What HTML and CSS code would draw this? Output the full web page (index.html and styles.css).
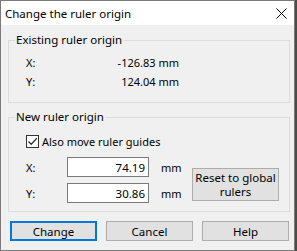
FILE: index.html
```html
<!DOCTYPE html>
<html lang="en">

<head>
    <meta charset="UTF-8">
    <title>Change the ruler origin</title>
    <link rel="stylesheet" href="styles.css">
</head>

<body>
    <div class="window">
        <div class="titlebar">
            <span class="title">Change the ruler origin</span>
            <svg class="close" width="11" height="11" viewBox="0 0 11 11">
                <path d="M0.5 0.5 L10.5 10.5 M10.5 0.5 L0.5 10.5" stroke="#000" stroke-width="1" fill="none" />
            </svg>
        </div>
        <div class="content">
            <fieldset class="group existing">
                <legend>Existing ruler origin</legend>
                <div class="row">
                    <span>X:</span>
                    <span>-126.83 mm</span>
                </div>
                <div class="row">
                    <span>Y:</span>
                    <span>124.04 mm</span>
                </div>
            </fieldset>

            <fieldset class="group fresh">
                <legend>New ruler origin</legend>
                <label class="check">
                    <span class="box">
                        <svg width="11" height="11" viewBox="0 0 11 11">
                            <path d="M1.5 5.5 L4.2 8.2 L9.8 2.2" stroke="#333" stroke-width="1.3" fill="none" />
                        </svg>
                    </span>
                    Also move ruler guides
                </label>
                <div class="bottom">
                    <div class="coords">
                        <span>X:</span>
                        <input type="text" value="74.19">
                        <span>mm</span>
                        <span>Y:</span>
                        <input type="text" value="30.86">
                        <span>mm</span>
                    </div>
                    <button class="btn reset">Reset to global<br>rulers</button>
                </div>
            </fieldset>

            <div class="actions">
                <button class="btn default">Change</button>
                <button class="btn">Cancel</button>
                <button class="btn">Help</button>
            </div>
        </div>
    </div>
</body>

</html>
```

FILE: styles.css
```css
body {
    margin: 0;
    background: #4e4c3c;
    font-family: "Noto Sans", sans-serif;
    font-size: 11px;
    color: #000;
}

.window {
    width: 295px;
    height: 251px;
    box-sizing: border-box;
    border: 1px solid #7a7a7a;
    background: #f0f0f0;
    display: flex;
    flex-direction: column;
}

.titlebar {
    height: 24px;
    background: #fff;
    display: flex;
    align-items: center;
    justify-content: space-between;
    padding-left: 4px;
    padding-right: 7px;
}

.title {
    font-size: 11.5px;
}

.close {
    display: block;
}

.content {
    padding: 0 4px 0 7px;
    display: flex;
    flex-direction: column;
}

.group {
    margin: 0;
    border: 1px solid #dcdcdc;
    padding: 0 10px 0 17px;
    min-width: 0;
}

.group legend {
    margin-left: -11px;
    padding: 0 1px;
    line-height: 16px;
    font-size: 11.5px;
}

.existing {
    margin-top: 7px;
    padding-top: 5px;
    padding-bottom: 11px;
}

.row {
    width: 153px;
    height: 19px;
    display: flex;
    align-items: center;
    justify-content: space-between;
}

.fresh {
    margin-top: 6px;
    padding-top: 10px;
    padding-bottom: 8px;
}

.check {
    display: flex;
    align-items: center;
    gap: 3px;
    height: 13px;
}

.box {
    width: 13px;
    height: 13px;
    box-sizing: border-box;
    border: 1px solid #333;
    background: #fff;
    display: flex;
    align-items: center;
    justify-content: center;
}

.box svg {
    display: block;
}

.bottom {
    margin-top: 9px;
    display: flex;
    align-items: flex-end;
    justify-content: space-between;
}

.coords {
    display: grid;
    grid-template-columns: 29px 82px auto;
    column-gap: 12px;
    row-gap: 6px;
    align-items: center;
}

.coords input {
    width: 82px;
    height: 20px;
    box-sizing: border-box;
    border: 1px solid #7a7a7a;
    padding: 0 3px 0 0;
    margin: 0;
    text-align: right;
    font-family: inherit;
    font-size: 11.5px;
    color: #000;
    background: #fff;
    outline: none;
}

.btn {
    font-family: inherit;
    font-size: 11.5px;
    color: #000;
    background: #e1e1e1;
    border: 1px solid #adadad;
    margin: 0;
    padding: 0;
    box-sizing: border-box;
    white-space: nowrap;
}

.reset {
    width: 87px;
    height: 33px;
    line-height: 14px;
    margin-bottom: 2px;
}

.actions {
    margin-top: 9px;
    display: flex;
    justify-content: space-between;
    padding: 0 1px 0 2px;
}

.actions .btn {
    width: 87px;
    height: 20px;
}

.actions .default {
    border: 2px solid #0078d7;
}
```
